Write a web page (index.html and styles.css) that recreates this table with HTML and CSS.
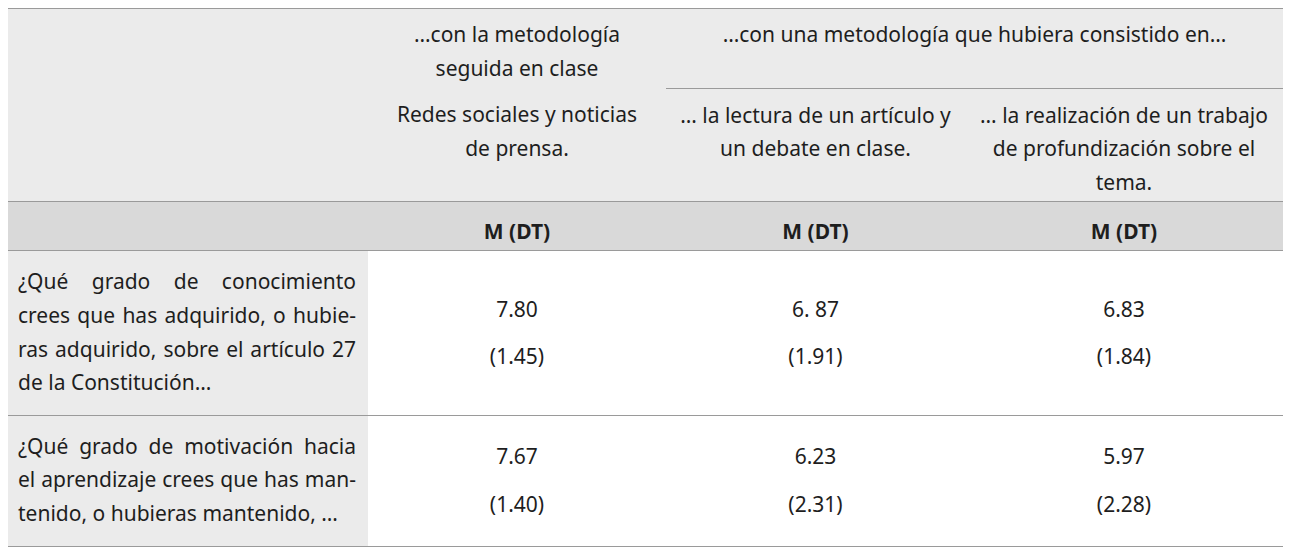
FILE: index.html
```html
<!DOCTYPE html>
<html lang="es">
<head>
<meta charset="utf-8">
<title>Tabla</title>
<link rel="stylesheet" href="styles.css">
</head>
<body>
<table class="results">
  <colgroup>
    <col class="c1">
    <col class="c2">
    <col class="c3">
    <col class="c4">
  </colgroup>
  <thead>
    <tr class="h1">
      <th rowspan="2" class="blank"></th>
      <th class="top">…con la metodología<br>seguida en clase</th>
      <th colspan="2" class="top span">…con una metodología que hubiera consistido en…</th>
    </tr>
    <tr class="h2">
      <th>Redes sociales y noticias<br>de prensa.</th>
      <th>… la lectura de un artículo y<br>un debate en clase.</th>
      <th>… la realización de un trabajo<br>de profundización sobre el<br>tema.</th>
    </tr>
    <tr class="h3">
      <th class="blank"></th>
      <th>M (DT)</th>
      <th>M (DT)</th>
      <th>M (DT)</th>
    </tr>
  </thead>
  <tbody>
    <tr>
      <td class="q">
        <span class="ln">¿Qué grado de conocimiento</span>
        <span class="ln">crees que has adquirido, o hubie-</span>
        <span class="ln">ras adquirido, sobre el artículo 27</span>
        <span class="ln end">de la Constitución…</span>
      </td>
      <td class="v"><div class="m">7.80</div><div class="sd">(1.45)</div></td>
      <td class="v"><div class="m">6. 87</div><div class="sd">(1.91)</div></td>
      <td class="v"><div class="m">6.83</div><div class="sd">(1.84)</div></td>
    </tr>
    <tr>
      <td class="q">
        <span class="ln">¿Qué grado de motivación hacia</span>
        <span class="ln">el aprendizaje crees que has man-</span>
        <span class="ln end">tenido, o hubieras mantenido, …</span>
      </td>
      <td class="v"><div class="m">7.67</div><div class="sd">(1.40)</div></td>
      <td class="v"><div class="m">6.23</div><div class="sd">(2.31)</div></td>
      <td class="v"><div class="m">5.97</div><div class="sd">(2.28)</div></td>
    </tr>
  </tbody>
</table>
</body>
</html>
```
FILE: styles.css
```css
html, body {
  margin: 0;
  padding: 0;
  background: #ffffff;
}
body {
  padding: 8px 0 0 8px;
  font-family: "Noto Sans", "Open Sans", sans-serif;
  font-size: 21px;
  line-height: 33.6px;
  color: #1e1e1e;
}
.results {
  border-collapse: collapse;
  table-layout: fixed;
  width: 1275px;
  border-top: 1px solid #9a9a9a;
}
.c1 { width: 360px; }
.c2 { width: 298px; }
.c3 { width: 299px; }
.c4 { width: 318px; }

th {
  font-weight: normal;
  text-align: center;
  vertical-align: top;
  padding: 0 6px;
  white-space: nowrap;
}
thead .h1 th,
thead .h2 th {
  background: #ebebeb;
}
.h1 th {
  padding-top: 9px;
  padding-bottom: 3px;
}
.h1 th.span {
  border-bottom: 1px solid #9a9a9a;
}
.h2 th {
  padding-top: 10px;
  padding-bottom: 2px;
}
.h2 {
  border-bottom: 1px solid #9a9a9a;
}
.h3 th {
  background: #d9d9d9;
  font-weight: bold;
  padding-top: 13px;
  padding-bottom: 0;
  height: 49px;
  box-sizing: border-box;
  border-bottom: 1px solid #9a9a9a;
}
td {
  border-bottom: 1px solid #9a9a9a;
}
td.q {
  background: #ebebeb;
  padding: 14px 12px 15px 10px;
  vertical-align: top;
}
.ln {
  display: block;
  white-space: nowrap;
  text-align: justify;
  text-align-last: justify;
}
.ln.end {
  text-align-last: left;
}
td.v {
  text-align: center;
  vertical-align: middle;
  padding: 0 10px;
}
.sd {
  margin-top: 14px;
}
```
